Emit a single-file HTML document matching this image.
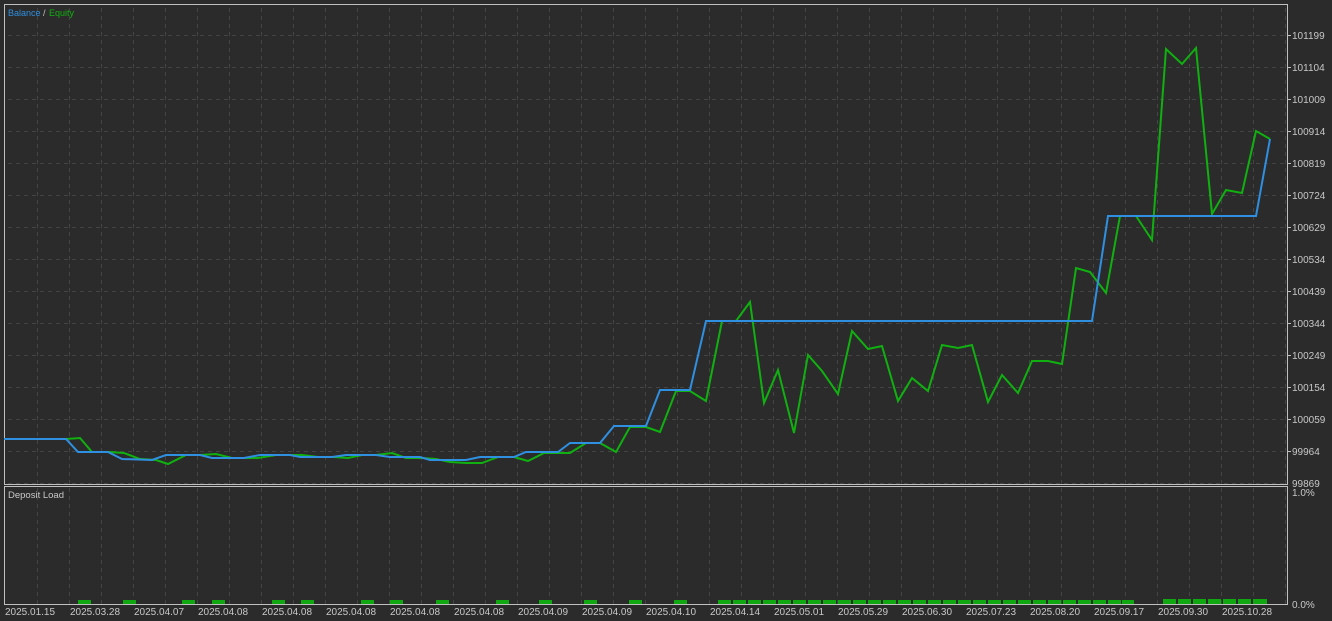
<!DOCTYPE html>
<html><head><meta charset="utf-8"><style>
html,body{margin:0;padding:0;background:#2b2b2b;}
svg{display:block;}
text{font-family:"Liberation Sans",sans-serif;font-size:10px;fill:#c8c8c8;}
</style></head><body>
<svg width="1332" height="621" viewBox="0 0 1332 621" xmlns="http://www.w3.org/2000/svg">
<defs>
<pattern id="vg" x="5" y="0" width="32" height="8" patternUnits="userSpaceOnUse"><rect x="0" y="0" width="1" height="4" fill="#444"/></pattern>
<pattern id="hg" x="0" y="35" width="8" height="32" patternUnits="userSpaceOnUse"><rect x="0" y="0" width="4" height="1" fill="#444"/></pattern>
</defs>
<rect width="1332" height="621" fill="#2b2b2b"/>
<rect x="6" y="5" width="1280" height="479" fill="url(#vg)"/>
<rect x="5" y="5" width="1281" height="479" fill="url(#hg)"/>
<rect x="6" y="487" width="1280" height="117" fill="url(#vg)"/>
<rect x="4.5" y="4.5" width="1283" height="480" fill="none" stroke="#c0c0c0"/>
<rect x="4.5" y="486.5" width="1283" height="118" fill="none" stroke="#c0c0c0"/>
<text x="8" y="16" style="fill:#2f8fe0;font-size:9px">Balance</text><text x="43" y="16" style="fill:#c0c0c0;font-size:9px">/</text><text x="49" y="16" style="fill:#10b010;font-size:9px">Equity</text>
<text x="8" y="498" style="font-size:9.5px">Deposit Load</text>
<g>
<text x="1292" y="39">101199</text>
<text x="1292" y="71">101104</text>
<text x="1292" y="103">101009</text>
<text x="1292" y="135">100914</text>
<text x="1292" y="167">100819</text>
<text x="1292" y="199">100724</text>
<text x="1292" y="231">100629</text>
<text x="1292" y="263">100534</text>
<text x="1292" y="295">100439</text>
<text x="1292" y="327">100344</text>
<text x="1292" y="359">100249</text>
<text x="1292" y="391">100154</text>
<text x="1292" y="423">100059</text>
<text x="1292" y="455">99964</text>
<text x="1292" y="487">99869</text>
<text x="1292" y="496">1.0%</text>
<text x="1292" y="608">0.0%</text>
</g>
<g stroke="#c0c0c0">
<line x1="1288" y1="35.5" x2="1291" y2="35.5"/><line x1="1288" y1="67.5" x2="1291" y2="67.5"/><line x1="1288" y1="99.5" x2="1291" y2="99.5"/><line x1="1288" y1="131.5" x2="1291" y2="131.5"/><line x1="1288" y1="163.5" x2="1291" y2="163.5"/><line x1="1288" y1="195.5" x2="1291" y2="195.5"/><line x1="1288" y1="227.5" x2="1291" y2="227.5"/><line x1="1288" y1="259.5" x2="1291" y2="259.5"/><line x1="1288" y1="291.5" x2="1291" y2="291.5"/><line x1="1288" y1="323.5" x2="1291" y2="323.5"/><line x1="1288" y1="355.5" x2="1291" y2="355.5"/><line x1="1288" y1="387.5" x2="1291" y2="387.5"/><line x1="1288" y1="419.5" x2="1291" y2="419.5"/><line x1="1288" y1="451.5" x2="1291" y2="451.5"/>
</g>
<g>
<text x="5" y="615">2025.01.15</text>
<text x="70" y="615">2025.03.28</text>
<text x="134" y="615">2025.04.07</text>
<text x="198" y="615">2025.04.08</text>
<text x="262" y="615">2025.04.08</text>
<text x="326" y="615">2025.04.08</text>
<text x="390" y="615">2025.04.08</text>
<text x="454" y="615">2025.04.08</text>
<text x="518" y="615">2025.04.09</text>
<text x="582" y="615">2025.04.09</text>
<text x="646" y="615">2025.04.10</text>
<text x="710" y="615">2025.04.14</text>
<text x="774" y="615">2025.05.01</text>
<text x="838" y="615">2025.05.29</text>
<text x="902" y="615">2025.06.30</text>
<text x="966" y="615">2025.07.23</text>
<text x="1030" y="615">2025.08.20</text>
<text x="1094" y="615">2025.09.17</text>
<text x="1158" y="615">2025.09.30</text>
<text x="1222" y="615">2025.10.28</text>
</g>
<g fill="#10a810">
<rect x="78" y="600" width="13" height="4"/><rect x="123" y="600" width="13" height="4"/><rect x="182" y="600" width="13" height="4"/><rect x="212" y="600" width="13" height="4"/><rect x="272" y="600" width="13" height="4"/><rect x="301" y="600" width="13" height="4"/><rect x="361" y="600" width="13" height="4"/><rect x="390" y="600" width="13" height="4"/><rect x="436" y="600" width="13" height="4"/><rect x="496" y="600" width="13" height="4"/><rect x="539" y="600" width="13" height="4"/><rect x="584" y="600" width="13" height="4"/><rect x="629" y="600" width="13" height="4"/><rect x="674" y="600" width="13" height="4"/>
<rect x="718" y="600" width="13" height="4"/><rect x="733" y="600" width="13" height="4"/><rect x="748" y="600" width="13" height="4"/><rect x="763" y="600" width="13" height="4"/><rect x="778" y="600" width="13" height="4"/><rect x="793" y="600" width="13" height="4"/><rect x="808" y="600" width="13" height="4"/><rect x="823" y="600" width="13" height="4"/><rect x="838" y="600" width="13" height="4"/><rect x="853" y="600" width="13" height="4"/><rect x="868" y="600" width="13" height="4"/><rect x="883" y="600" width="13" height="4"/><rect x="898" y="600" width="13" height="4"/><rect x="913" y="600" width="13" height="4"/><rect x="928" y="600" width="13" height="4"/><rect x="943" y="600" width="13" height="4"/><rect x="958" y="600" width="13" height="4"/><rect x="973" y="600" width="13" height="4"/><rect x="988" y="600" width="13" height="4"/><rect x="1003" y="600" width="13" height="4"/><rect x="1018" y="600" width="13" height="4"/><rect x="1033" y="600" width="13" height="4"/><rect x="1048" y="600" width="13" height="4"/><rect x="1063" y="600" width="13" height="4"/><rect x="1078" y="600" width="13" height="4"/><rect x="1093" y="600" width="13" height="4"/><rect x="1108" y="600" width="13" height="4"/><rect x="1122" y="600" width="12" height="4"/>
<rect x="1163" y="599" width="13" height="5"/><rect x="1178" y="599" width="13" height="5"/><rect x="1193" y="599" width="13" height="5"/><rect x="1208" y="599" width="13" height="5"/><rect x="1223" y="599" width="13" height="5"/><rect x="1238" y="599" width="13" height="5"/><rect x="1253" y="599" width="14" height="5"/>
</g>
<polyline fill="none" stroke="#10b010" stroke-width="2" points="4,439 66,439 80,438 92,452 110,452 124,453 140,459 156,460 168,464 186,455 200,455 216,454 232,458 248,458 258,458 276,455 290,455 302,455 318,457 334,457 348,458 362,455 376,455 392,453 406,458 422,458 436,459 450,462 466,463 482,463 498,457 514,457 528,461 544,453 560,453 570,453 586,443 600,443 616,452 630,427 646,427 660,432 676,391 690,391 706,401 722,321 736,321 750,302 764,403 778,370 794,433 808,355 822,371 838,394 852,331 868,349 882,346 898,401 912,378 928,391 942,345 958,348 972,345 988,402 1002,375 1018,393 1032,361 1048,361 1062,364 1076,268 1090,272 1106,293 1120,216 1136,216 1152,240 1166,49 1182,64 1196,48 1212,214 1226,190 1242,193 1256,131 1270,139"/>
<polyline fill="none" stroke="#2f8fe0" stroke-width="2" points="4,439 66,439 78,452 108,452 122,459 152,460 166,455 200,455 212,458 244,458 260,455 290,455 300,457 332,457 346,455 376,455 390,457 420,457 430,460 466,460 480,457 514,457 526,452 558,452 570,443 600,443 614,426 646,426 660,390 690,390 706,321 1092,321 1108,216 1256,216 1270,139"/>
</svg>
</body></html>
